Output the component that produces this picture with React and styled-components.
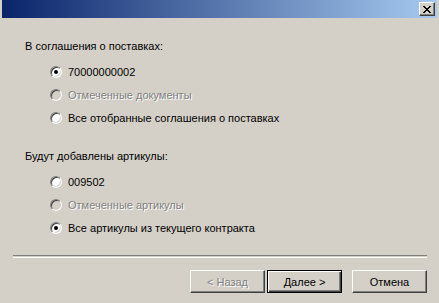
import React from 'react';
import styled, { createGlobalStyle } from 'styled-components';

const GlobalStyle = createGlobalStyle`
  html, body {
    margin: 0;
    padding: 0;
    background: #d4d0c8;
  }
  body {
    font-family: "Liberation Sans", Arial, sans-serif;
    font-size: 11px;
    color: #000;
  }
`;

const Window = styled.div`
  width: 439px;
  height: 303px;
  padding: 0 2px;
  box-sizing: border-box;
  background: #d4d0c8;
  overflow: hidden;
`;

const TitleBar = styled.div`
  height: 18px;
  display: flex;
  align-items: center;
  justify-content: flex-end;
  padding-right: 2px;
  background: linear-gradient(to right, #0a246a, #a6caf0);
`;

const CloseButton = styled.div`
  width: 16px;
  height: 14px;
  box-sizing: border-box;
  background: #d4d0c8;
  border: 1px solid;
  border-color: #fff #404040 #404040 #fff;
  box-shadow: inset -1px -1px #808080;
  display: flex;
  align-items: center;
  justify-content: center;
`;

const Content = styled.div`
  padding: 22px 10px 0 10px;
`;

const Group = styled.div`
  padding-left: 13px;
  margin-bottom: ${p => p.gap || 0}px;
`;

const GroupLabel = styled.div`
  line-height: 13px;
  height: 13px;
  margin-bottom: 7px;
`;

const Options = styled.div`
  padding-left: 25px;
`;

const OptionRow = styled.label`
  display: flex;
  align-items: center;
  height: 23px;
  gap: 6px;
  color: ${p => (p.disabled ? '#808080' : '#000')};
  text-shadow: ${p => (p.disabled ? '1px 1px 0 #fff' : 'none')};
`;

const RadioCircle = styled.span`
  position: relative;
  width: 12px;
  height: 12px;
  box-sizing: border-box;
  border-radius: 50%;
  border: 1px solid;
  border-color: #808080 #fff #fff #808080;
  background: ${p => (p.disabled ? '#d4d0c8' : '#fff')};
  box-shadow: inset 1px 1px #404040, inset -1px -1px #d4d0c8;
  flex-shrink: 0;
`;

const RadioDot = styled.span`
  position: absolute;
  left: 3px;
  top: 3px;
  width: 4px;
  height: 4px;
  border-radius: 50%;
  background: #000;
`;

const Separator = styled.div`
  margin: 16px 0 12px 1px;
  height: 1px;
  border-top: 1px solid #808080;
  border-bottom: 1px solid #fff;
`;

const Footer = styled.div`
  display: flex;
  justify-content: flex-end;
`;

const Button = styled.div`
  width: 75px;
  height: 23px;
  box-sizing: border-box;
  display: flex;
  align-items: center;
  justify-content: center;
  margin-left: ${p => p.space || 0}px;
  background: #d4d0c8;
  border: 1px solid;
  border-color: ${p => (p.primary ? '#000' : '#fff #404040 #404040 #fff')};
  box-shadow: ${p =>
    p.primary
      ? 'inset 1px 1px #fff, inset -1px -1px #404040, inset -2px -2px #808080'
      : 'inset -1px -1px #808080'};
  color: ${p => (p.disabled ? '#808080' : '#000')};
  text-shadow: ${p => (p.disabled ? '1px 1px 0 #fff' : 'none')};
`;

const Radio = ({ checked, disabled, children }) => (
  <OptionRow disabled={disabled}>
    <RadioCircle disabled={disabled}>{checked && <RadioDot />}</RadioCircle>
    <span>{children}</span>
  </OptionRow>
);

const App = () => (
  <Window>
    <GlobalStyle />
    <TitleBar>
      <CloseButton>
        <svg width="8" height="7" viewBox="0 0 8 7">
          <path d="M0 0h2v1h1v1h2v-1h1v-1h2v1h-1v1h-1v1h-1v1h1v1h1v1h1v1h-2v-1h-1v-1h-2v1h-1v1h-2v-1h1v-1h1v-1h1v-1h-1v-1h-1v-1h-1z" fill="#000" />
        </svg>
      </CloseButton>
    </TitleBar>
    <Content>
      <Group gap={21}>
        <GroupLabel>В соглашения о поставках:</GroupLabel>
        <Options>
          <Radio checked>70000000002</Radio>
          <Radio disabled>Отмеченные документы</Radio>
          <Radio>Все отобранные соглашения о поставках</Radio>
        </Options>
      </Group>
      <Group>
        <GroupLabel>Будут добавлены артикулы:</GroupLabel>
        <Options>
          <Radio>009502</Radio>
          <Radio disabled>Отмеченные артикулы</Radio>
          <Radio checked>Все артикулы из текущего контракта</Radio>
        </Options>
      </Group>
      <Separator />
      <Footer>
        <Button disabled>&lt; Назад</Button>
        <Button primary space={2}>Далее &gt;</Button>
        <Button space={10}>Отмена</Button>
      </Footer>
    </Content>
  </Window>
);

export default App;
